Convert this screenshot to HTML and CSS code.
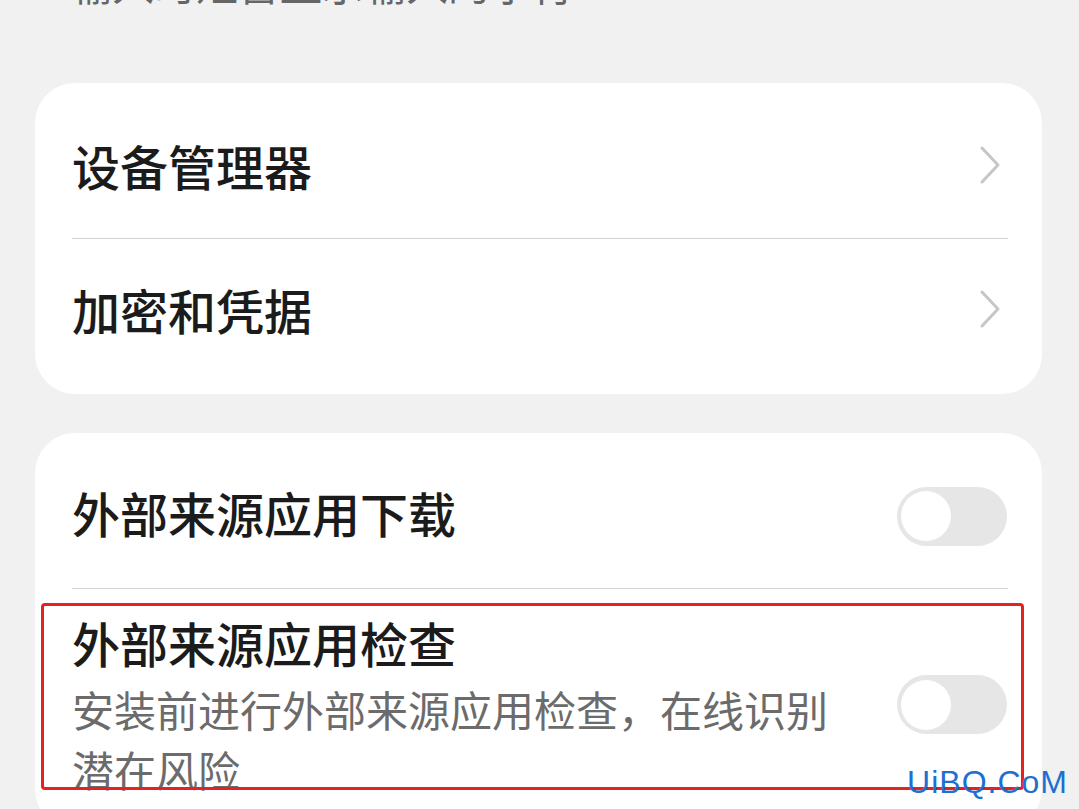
FILE: index.html
```html
<!DOCTYPE html>
<html lang="zh-CN">
<head>
    <meta charset="UTF-8">
    <meta name="viewport" content="width=device-width, initial-scale=1.0">
    <title>安全</title>
    <link rel="stylesheet" href="styles.css">
</head>
<body>
    <div class="page">
        <div class="top-note">输入时短暂显示输入的字符</div>

        <div class="card">
            <div class="row row-first">
                <span class="row-title">设备管理器</span>
                <svg class="chevron" width="24" height="40" viewBox="0 0 24 40">
                    <path d="M4 3 L20 20 L4 37" fill="none" stroke="#c6c6c6" stroke-width="3" stroke-linecap="round" stroke-linejoin="round"/>
                </svg>
            </div>
            <div class="divider"></div>
            <div class="row row-last">
                <span class="row-title">加密和凭据</span>
                <svg class="chevron" width="24" height="40" viewBox="0 0 24 40">
                    <path d="M4 3 L20 20 L4 37" fill="none" stroke="#c6c6c6" stroke-width="3" stroke-linecap="round" stroke-linejoin="round"/>
                </svg>
            </div>
        </div>

        <div class="card">
            <div class="row row-switch">
                <span class="row-title">外部来源应用下载</span>
                <div class="switch"><div class="knob"></div></div>
            </div>
            <div class="divider"></div>
            <div class="row row-tall">
                <div class="row-text">
                    <div class="row-title">外部来源应用检查</div>
                    <div class="row-desc">安装前进行外部来源应用检查，在线识别<br>潜在风险</div>
                </div>
                <div class="switch"><div class="knob"></div></div>
                <!-- annotation box drawn over the row -->
                <div class="mark"></div>
            </div>
        </div>
    </div>
    <div class="watermark">UiBQ.CoM</div>
</body>
</html>
```

FILE: styles.css
```css
body{
    margin: 0;
    background-color: #f1f1f2;
    font-family: "Noto Sans CJK SC", "Noto Sans", sans-serif;
    color: #1b1b1b;
    overflow: hidden;
    height: 809px;
    position: relative;
}
.page{
    padding: 0 37px 0 35px;
}
.top-note{
    margin-top: -42px;
    height: 50px;
    line-height: 50px;
    padding-left: 35px;
    font-size: 42px;
    color: #666666;
    margin-bottom: 75px;
}
.card{
    background-color: #ffffff;
    border-radius: 40px;
    margin-bottom: 39px;
}
.row{
    height: 155px;
    display: flex;
    align-items: center;
    justify-content: space-between;
    padding: 0 35px 0 37px;
    position: relative;
    box-sizing: border-box;
}
.row-first{
    padding-top: 9px;
}
.row-last{
    padding-bottom: 15px;
}
.row-switch{
    padding-top: 3px;
}
.row-switch .switch{
    margin-top: 8px;
}
.row-title{
    font-size: 48px;
    font-weight: 500;
    line-height: 60px;
}
.chevron{
    margin-right: 5px;
}
.divider{
    height: 1px;
    background-color: #d2d2d2;
    margin: 0 34px 0 37px;
}
.row-tall{
    height: auto;
    align-items: flex-start;
    padding-top: 23px;
    padding-bottom: 30px;
}
.row-desc{
    font-size: 42px;
    color: #6b6b6b;
    line-height: 60px;
    margin-top: 7px;
}
.switch{
    width: 110px;
    height: 59px;
    border-radius: 30px;
    background-color: #e6e6e6;
    display: flex;
    align-items: center;
    padding-left: 4px;
    box-sizing: border-box;
    flex-shrink: 0;
}
.row-tall .switch{
    margin-top: 63px;
}
.knob{
    width: 50px;
    height: 50px;
    border-radius: 50%;
    background-color: #ffffff;
}
.mark{
    position: absolute;
    top: 14px;
    left: 6px;
    right: 18px;
    height: 181px;
    border: 3px solid #e3231f;
    border-radius: 4px;
}
.watermark{
    position: absolute;
    right: 11px;
    bottom: 8px;
    font-family: "Liberation Sans", sans-serif;
    font-size: 32px;
    color: #1f6fd0;
    letter-spacing: 1px;
}
```
